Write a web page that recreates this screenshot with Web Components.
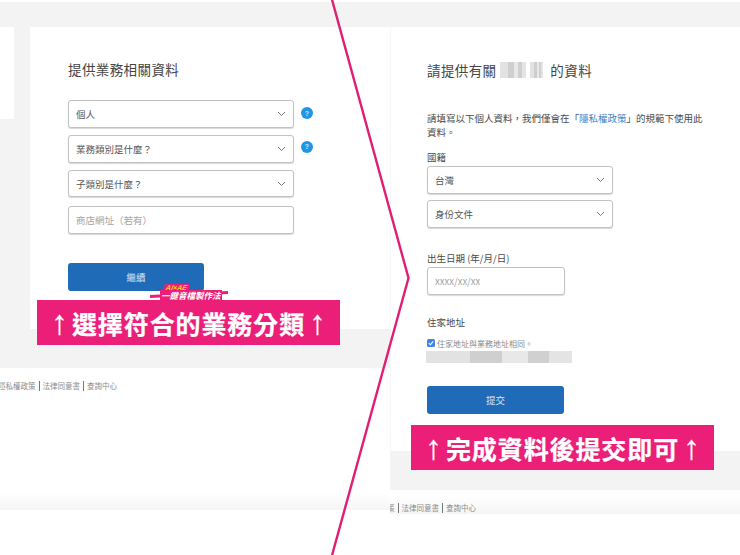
<!DOCTYPE html>
<html lang="zh-Hant">
<head>
<meta charset="utf-8">
<title>業務資料</title>
<style>
  html, body { margin: 0; background: #fff; }
  body {
    position: relative;
    width: 740px;
    height: 555px;
    overflow: hidden;
    display: flex;
    font-family: "Noto Sans CJK TC", "Noto Sans", sans-serif;
    color: #4a4a4a;
  }
  .row { display: flex; align-items: center; gap: 7px; }
</style>
</head>
<body>
  <shot-panel side="left" style="width:390px">
    <form-card>
      <form-title>提供業務相關資料</form-title>
      <div style="height:20px"></div>
      <div class="row" style="margin-bottom:7px"><form-select style="width:226px">個人</form-select><help-dot></help-dot></div>
      <div class="row" style="margin-bottom:7px"><form-select style="width:226px">業務類別是什麼？</form-select><help-dot style="margin-bottom:5px"></help-dot></div>
      <form-select style="width:226px;height:27px;margin-bottom:9px">子類別是什麼？</form-select>
      <form-input style="width:226px">商店網址（若有）</form-input>
      <primary-button style="width:136px;margin-top:29px">繼續</primary-button>
    </form-card>
    <page-footer slot="footer" style="width:117px">隱私權政策<i></i>法律同意書<i></i>查詢中心</page-footer>
  </shot-panel>

  <shot-panel side="right" style="width:350px">
    <form-card>
      <form-title>請提供有關 <blur-patch style="width:26px;height:16px"></blur-patch><blur-patch style="width:13px;height:16px"></blur-patch> 的資料</form-title>
      <form-note>請填寫以下個人資料，我們僅會在「<a>隱私權政策</a>」的規範下使用此<br>資料。</form-note>
      <form-label style="margin-top:11px">國籍</form-label>
      <form-select style="width:186px;margin-bottom:6px">台灣</form-select>
      <form-select style="width:186px">身份文件</form-select>
      <form-label style="margin-top:23px">出生日期 (年/月/日)</form-label>
      <form-input style="width:138px">xxxx/xx/xx</form-input>
      <form-label style="margin-top:20px">住家地址</form-label>
      <check-line>住家地址與業務地址相同。</check-line>
      <blur-patch style="display:block;width:146px;height:12px;margin:2px 0 0 -1px"></blur-patch>
      <primary-button style="width:137px;margin-top:23px">提交</primary-button>
    </form-card>
    <page-footer slot="footer" style="width:86px">隱私權政策<i></i>法律同意書<i></i>查詢中心</page-footer>
  </shot-panel>

  <promo-banner style="left:37px;top:300px"><b>↑</b>選擇符合的業務分類<b>↑</b></promo-banner>
  <promo-banner style="left:411px;top:425px"><b>↑</b>完成資料後提交即可<b>↑</b></promo-banner>
  <promo-sticker></promo-sticker>
  <split-line></split-line>

<script>
class ShotPanel extends HTMLElement {
  constructor() {
    super();
    const left = this.getAttribute("side") === "left";
    this.attachShadow({ mode: "open" }).innerHTML = `
      <style>
        :host { display: flex; flex-direction: column; flex: none; height: 555px; }
        .top { height: 25px; margin-top: 2px; background: #f3f3f3; flex: none; }
        .main { display: flex; flex: none; height: ${left ? 302 : 424}px; background: ${left ? "#f3f3f3" : "#fff"}; }
        .stub { width: 14px; height: 92px; background: #fff; margin-right: 16px; flex: none; }
        .band { height: 39px; background: #f3f3f3; flex: none; }
        .foot { height: ${left ? 142 : 24}px; background: linear-gradient(#fff ${left ? "88%" : "20%"}, #f5f5f5); flex: none; }
        .gutter { width: 1px; flex: none; background: #f7f7f7; }
        .wrap { flex: 1; display: flex; min-width: 0; }
      </style>
      <div class="top"></div>
      <div class="main">
        ${left ? '<div class="stub"></div>' : '<div class="gutter"></div>'}
        <div class="wrap"><slot></slot></div>
      </div>
      <div class="band"></div>
      <div class="foot"><slot name="footer"></slot></div>`;
  }
}

class FormCard extends HTMLElement {
  constructor() {
    super();
    const side = this.parentElement.getAttribute("side");
    const pad = side === "left" ? "31px 0 0 38px" : "32px 0 0 36px";
    this.attachShadow({ mode: "open" }).innerHTML = `
      <style>
        :host { display: block; flex: 1; background: #fff; padding: ${pad}; box-sizing: border-box; }
      </style>
      <slot></slot>`;
  }
}

class FormTitle extends HTMLElement {
  constructor() {
    super();
    this.attachShadow({ mode: "open" }).innerHTML = `
      <style>
        :host { display: flex; align-items: center; gap: 0; height: 22px; font-size: 13.5px; letter-spacing: .4px; color: #454545; white-space: pre; }
        ::slotted(blur-patch) { margin-right: 4px; }
      </style>
      <slot></slot>`;
  }
}

class FormNote extends HTMLElement {
  constructor() {
    super();
    this.attachShadow({ mode: "open" }).innerHTML = `
      <style>
        :host { display: block; width: 282px; margin-top: 30px; font-size: 9.5px; line-height: 14px; color: #4a4a4a; }
        ::slotted(a) { color: #3f83c9; }
      </style>
      <slot></slot>`;
  }
}

class FormLabel extends HTMLElement {
  constructor() {
    super();
    this.attachShadow({ mode: "open" }).innerHTML = `
      <style>
        :host { display: block; height: 14px; margin-bottom: 2px; font-size: 9.5px; line-height: 14px; color: #4a4a4a; }
      </style>
      <slot></slot>`;
  }
}

const fieldStyle = `
  box-sizing: border-box; display: flex; align-items: center; height: 28px; padding: 0 7px;
  background: #fff; border: 1px solid #c2c2c2; border-radius: 3px; box-shadow: 0 1px 1px #d8d8d8;
  font-size: 9.5px; color: #555; flex: none;`;

class FormSelect extends HTMLElement {
  constructor() {
    super();
    this.attachShadow({ mode: "open" }).innerHTML = `
      <style>
        :host { ${fieldStyle} justify-content: space-between; }
        svg { width: 9px; height: 6px; }
      </style>
      <span><slot></slot></span>
      <svg viewBox="0 0 9 6"><polyline points="1,1 4.5,4.5 8,1" fill="none" stroke="#666" stroke-width=".9"/></svg>`;
  }
}

class FormInput extends HTMLElement {
  constructor() {
    super();
    this.attachShadow({ mode: "open" }).innerHTML = `
      <style>
        :host { ${fieldStyle} color: #a3a3a3; }
      </style>
      <slot></slot>`;
  }
}

class HelpDot extends HTMLElement {
  constructor() {
    super();
    this.attachShadow({ mode: "open" }).innerHTML = `
      <style>
        :host { display: flex; align-items: center; justify-content: center; width: 12px; height: 12px; margin: 0 0 2px 0; border-radius: 50%; background: #2196e6; color: #cfe6f8; font: bold 7px "Liberation Sans", sans-serif; flex: none; }
      </style>?`;
  }
}

class PrimaryButton extends HTMLElement {
  constructor() {
    super();
    this.attachShadow({ mode: "open" }).innerHTML = `
      <style>
        :host { display: flex; align-items: center; justify-content: center; box-sizing: border-box; height: 28px; background: #1f6bb8; border-radius: 3px; color: #d9e8f6; font-size: 9.5px; }
      </style>
      <slot></slot>`;
  }
}

class BlurPatch extends HTMLElement {
  constructor() {
    super();
    this.attachShadow({ mode: "open" }).innerHTML = `
      <style>
        :host { display: inline-block; flex: none; filter: blur(.7px);
          background: linear-gradient(90deg, #e2e2e2 0 30%, #cfcfcf 30% 52%, #e8e8e8 52% 70%, #d0d0d0 70% 84%, #e4e4e4 84%); }
      </style>`;
  }
}

class CheckLine extends HTMLElement {
  constructor() {
    super();
    this.attachShadow({ mode: "open" }).innerHTML = `
      <style>
        :host { display: flex; align-items: center; gap: 2px; height: 12px; margin-top: 8px; font-size: 8px; color: #8a8a8a; }
        svg { width: 8px; height: 8px; flex: none; }
      </style>
      <svg viewBox="0 0 8 8"><rect width="8" height="8" rx="1.5" fill="#3f86e8"/><polyline points="1.8,4.2 3.4,5.8 6.2,2.4" fill="none" stroke="#fff" stroke-width="1.1"/></svg>
      <span><slot></slot></span>`;
  }
}

class PageFooter extends HTMLElement {
  constructor() {
    super();
    this.attachShadow({ mode: "open" }).innerHTML = `
      <style>
        :host { display: flex; justify-content: flex-end; overflow: hidden; height: 14px; margin-top: 11px; font-size: 7.5px; line-height: 14px; color: #8c8c8c; white-space: pre; }
        div { display: flex; align-items: center; }
        ::slotted(i) { display: block; width: 1px; height: 10px; margin: 0 3px; background: #777; }
      </style>
      <div><slot></slot></div>`;
  }
}

class PromoBanner extends HTMLElement {
  constructor() {
    super();
    this.attachShadow({ mode: "open" }).innerHTML = `
      <style>
        :host { position: absolute; display: flex; align-items: center; justify-content: center; gap: 4px; width: 303px; height: 45px; background: #eb1e78; color: #fff; font-size: 25px; font-weight: 700; letter-spacing: .9px; white-space: nowrap; -webkit-text-stroke: .25px #fff; }
        ::slotted(b) { font: 400 34px/45px "Liberation Sans", sans-serif; letter-spacing: 0; }
      </style>
      <slot></slot>`;
  }
}

class PromoSticker extends HTMLElement {
  constructor() {
    super();
    this.attachShadow({ mode: "open" }).innerHTML = `
      <style>
        :host { position: absolute; left: 150px; top: 284px; width: 78px; height: 16px; }
        .ai { position: absolute; left: 14px; top: 0; font: italic bold 7px/8px "Liberation Sans", sans-serif; color: #ffd21f; background: #eb1e78; padding: 0 2px; transform: skewX(-12deg); }
        .stripe { position: absolute; left: 0; right: 0; top: 9px; height: 3px; background: #eb1e78; transform: skewY(-3deg); }
        .name { position: absolute; left: 10px; top: 6px; padding: 0 1px; background: #eb1e78; font: italic 700 8.5px/10px "Noto Sans CJK TC", sans-serif; color: #fff; white-space: nowrap; }
      </style>
      <div class="stripe"></div>
      <div class="ai">AI×AE</div>
      <div class="name">一鍵音檔製作法</div>`;
  }
}

class SplitLine extends HTMLElement {
  constructor() {
    super();
    this.attachShadow({ mode: "open" }).innerHTML = `
      <style>
        :host { position: absolute; left: 0; top: 0; width: 740px; height: 555px; pointer-events: none; }
        svg { display: block; }
      </style>
      <svg width="740" height="555" viewBox="0 0 740 555"><polyline points="331,-4 408.5,278 331,559" fill="none" stroke="#e01f74" stroke-width="2.4"/></svg>`;
  }
}

customElements.define("shot-panel", ShotPanel);
customElements.define("form-card", FormCard);
customElements.define("form-title", FormTitle);
customElements.define("form-note", FormNote);
customElements.define("form-label", FormLabel);
customElements.define("form-select", FormSelect);
customElements.define("form-input", FormInput);
customElements.define("help-dot", HelpDot);
customElements.define("primary-button", PrimaryButton);
customElements.define("blur-patch", BlurPatch);
customElements.define("check-line", CheckLine);
customElements.define("page-footer", PageFooter);
customElements.define("promo-banner", PromoBanner);
customElements.define("promo-sticker", PromoSticker);
customElements.define("split-line", SplitLine);
</script>
</body>
</html>
